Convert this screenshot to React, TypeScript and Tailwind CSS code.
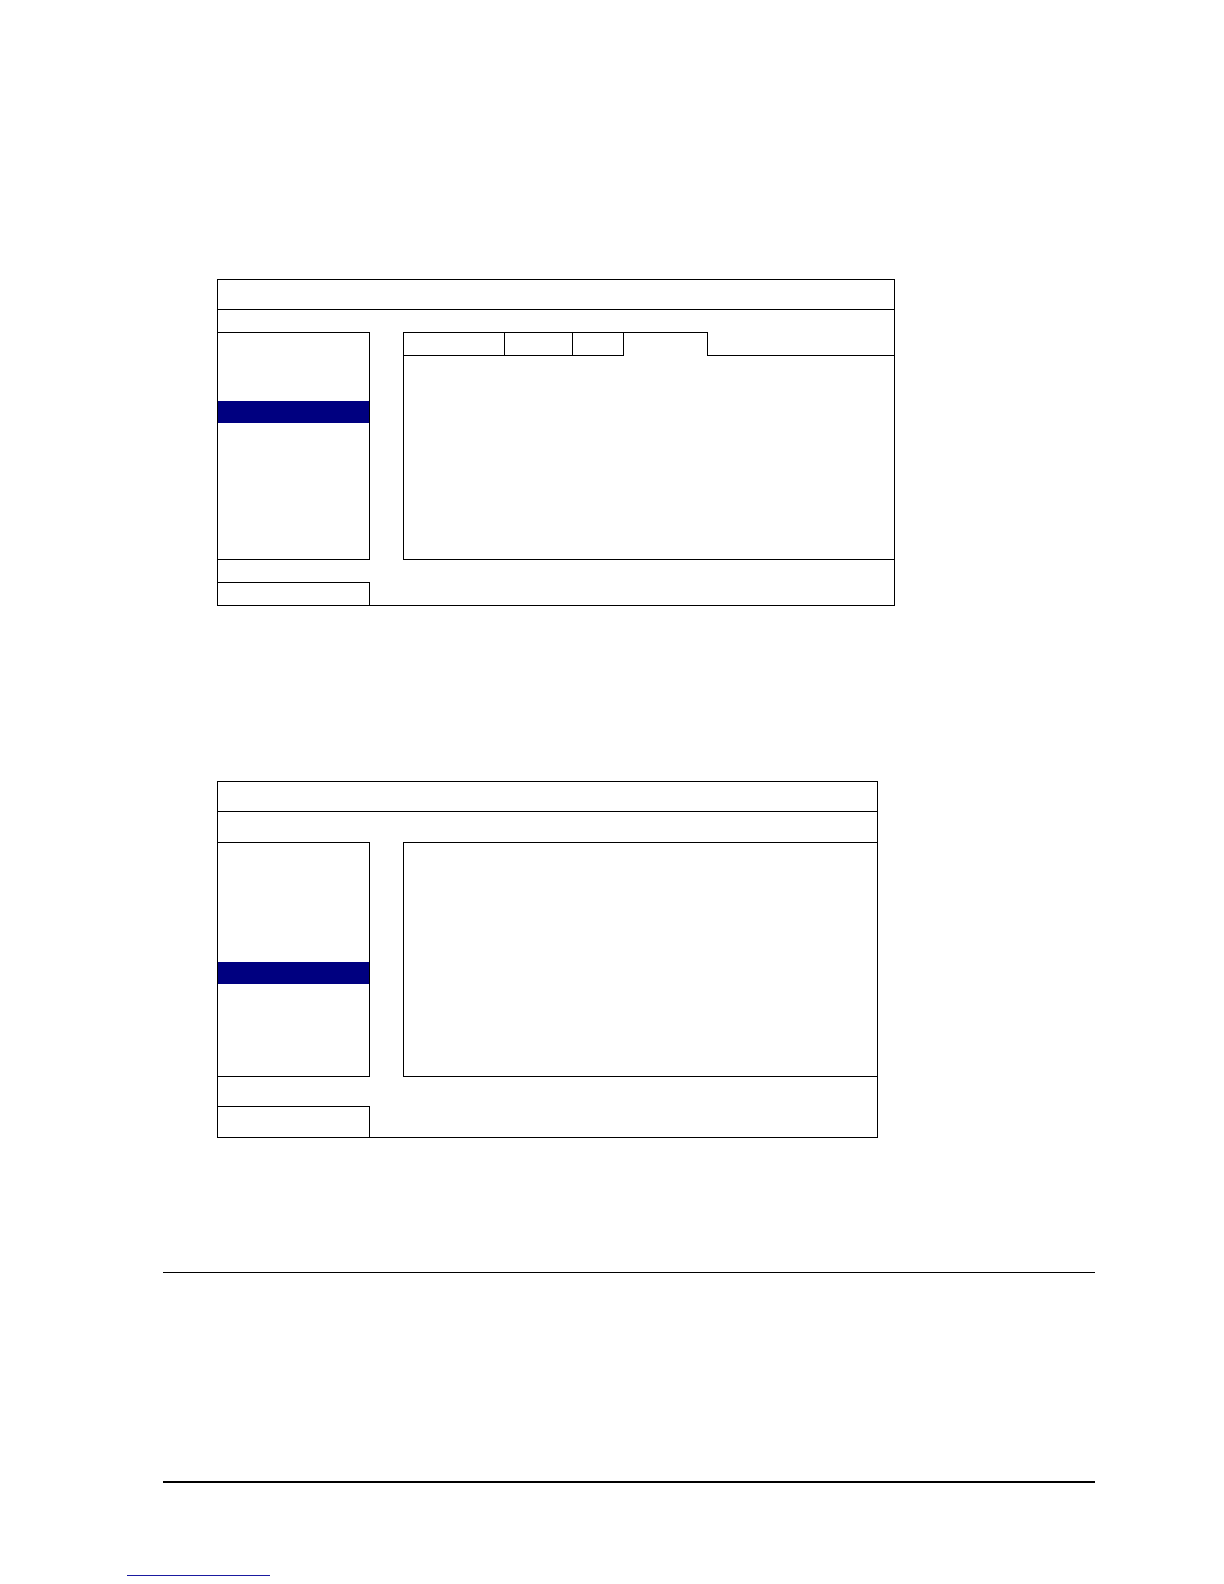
import React from "react";

function Box1() {
  return (
    <div className="ml-[217px] mt-[279px] w-[678px] h-[327px] border border-black flex flex-col">
      <div className="h-[30px] border-b border-black shrink-0" />
      <div className="h-[22px] shrink-0" />
      <div className="h-[228px] flex shrink-0">
        <div className="w-[152px] h-full border-t border-r border-b border-black">
          <div className="mt-[68px] h-[22px] bg-[#000080]" />
        </div>
        <div className="w-[33px]" />
        <div className="flex-1 h-full border-l border-b border-black flex flex-col">
          <div className="h-[24px] flex shrink-0">
            <div className="w-[101px] border-t border-b border-r border-black" />
            <div className="w-[68px] border-t border-b border-r border-black" />
            <div className="w-[51px] border-t border-b border-r border-black" />
            <div className="w-[84px] border-t border-r border-black" />
            <div className="flex-1 border-b border-black" />
          </div>
          <div className="flex-1" />
        </div>
      </div>
      <div className="h-[22px] shrink-0" />
      <div className="w-[152px] flex-1 border-t border-r border-black" />
    </div>
  );
}

function Box2() {
  return (
    <div className="ml-[217px] mt-[175px] w-[661px] h-[357px] border border-black flex flex-col">
      <div className="h-[30px] border-b border-black shrink-0" />
      <div className="h-[30px] shrink-0" />
      <div className="h-[235px] flex shrink-0">
        <div className="w-[152px] h-full border-t border-r border-b border-black">
          <div className="mt-[119px] h-[22px] bg-[#000080]" />
        </div>
        <div className="w-[33px]" />
        <div className="flex-1 h-full border-t border-l border-b border-black" />
      </div>
      <div className="h-[29px] shrink-0" />
      <div className="w-[152px] flex-1 border-t border-r border-black" />
    </div>
  );
}

export default function App() {
  return (
    <div className="w-[1224px] h-[1584px] bg-white flex flex-col items-start overflow-hidden">
      <Box1 />
      <Box2 />
      <div className="ml-[163px] mt-[134px] w-[932px] h-px bg-black" />
      <div className="ml-[163px] mt-[208px] w-[932px] h-[2px] bg-black" />
      <div className="ml-[127px] mt-[92px] w-[143px] h-px bg-[#1a1aa0]" />
    </div>
  );
}
